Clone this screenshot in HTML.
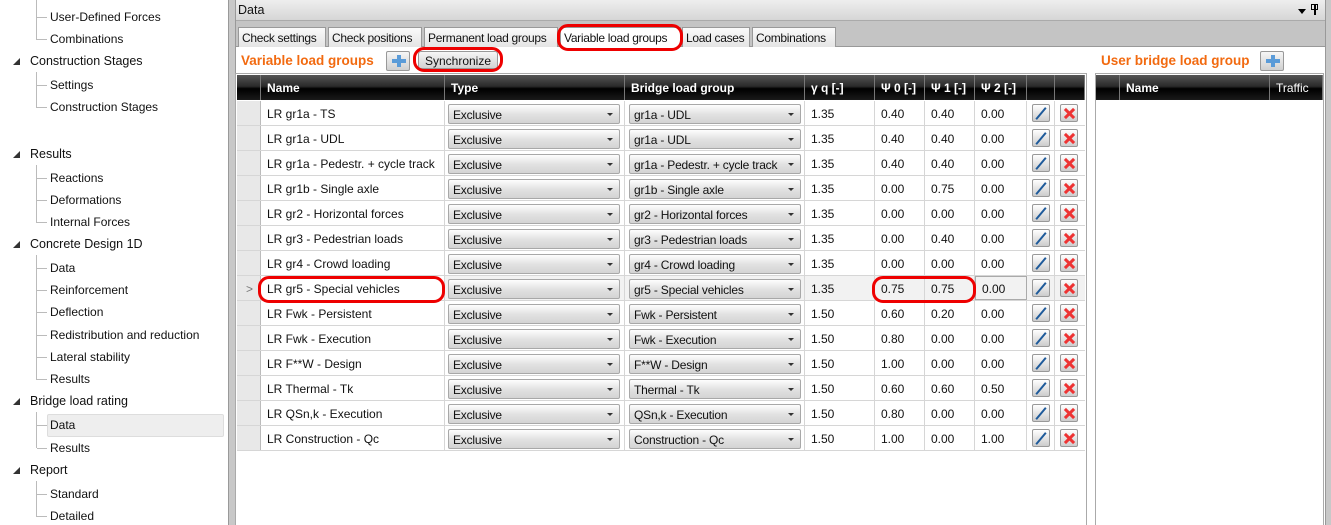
<!DOCTYPE html><html><head><style>
*{margin:0;padding:0;box-sizing:border-box}
body{width:1331px;height:525px;overflow:hidden;background:#fff;font-family:"Liberation Sans",sans-serif;font-size:12px;color:#111;position:relative}
.a{position:absolute;white-space:nowrap}
.t1{position:absolute;left:30px;font-size:12.5px;white-space:nowrap}
.t2{position:absolute;left:50px;font-size:12px;white-space:nowrap}
.tri{position:absolute;left:13px;width:0;height:0;border-left:7px solid transparent;border-bottom:7px solid #333}
.vl{position:absolute;left:36px;border-left:1px solid #bbb}
.hl{position:absolute;left:37px;width:10px;border-top:1px solid #bbb}
.tab{position:absolute;top:27px;height:20px;background:linear-gradient(#fafafa,#e4e4e4);border:1px solid #999;border-bottom:none;padding:3px 3px 0;font-size:12px;letter-spacing:-0.3px;white-space:nowrap;overflow:hidden}
.hd{position:absolute;top:75px;height:25px;background:linear-gradient(#555 0%,#2a2a2a 45%,#000 55%,#1a1a1a 100%);color:#fff;font-weight:bold;font-size:12px;padding:6px 6px 0;border-right:1px solid #777;white-space:nowrap}
.row{position:absolute;left:237px;width:848px;height:25px;border-bottom:1px solid #d6d6d6}
.c{position:absolute;top:0;height:24px;border-right:1px solid #d6d6d6;padding:6px 6px 0;font-size:12px;white-space:nowrap}
.rh{left:0;width:24px;background:#e8e8e8;border-right:1px solid #bbb}
.dd{position:absolute;top:3px;height:20px;border:1px solid #a8a8a8;border-radius:2px;background:linear-gradient(#fdfdfd,#e2e2e2 50%,#d4d4d4);padding:3px 4px 0;font-size:12px;white-space:nowrap;overflow:hidden;letter-spacing:-0.2px}
.dd:after{content:"";position:absolute;right:6px;top:8px;border-left:3px solid transparent;border-right:3px solid transparent;border-top:3px solid #333}
.ed,.dl{position:absolute;top:3px;width:18px;height:18px;border:1px solid #999;border-radius:2px;background:linear-gradient(#fff,#ccc)}
.ed:after{content:"";position:absolute;left:7px;top:1px;width:2px;height:15px;background:#1e5a9a;transform:rotate(40deg)}
.dl:before,.dl:after{content:"";position:absolute;left:7px;top:2px;width:3px;height:13px;background:#e33;transform:rotate(45deg)}
.dl:after{transform:rotate(-45deg)}
.red{position:absolute;border:3px solid #e00;border-radius:11px}
.or{color:#f26a10;font-weight:bold;font-size:13.5px}
.plus{position:absolute;width:24px;height:20px;border:1px solid #999;border-radius:2px;background:linear-gradient(#f6f6f6,#d0d0d0)}
.plus:before{content:"";position:absolute;left:10px;top:3px;width:4px;height:12px;background:#5a9bd8}
.plus:after{content:"";position:absolute;left:5px;top:7px;width:14px;height:4px;background:#5a9bd8}
</style></head><body>
<div class="vl" style="top:0;height:40px"></div>
<div class="hl" style="top:17px"></div><div class="t2" style="top:10px">User-Defined Forces</div>
<div class="hl" style="top:39px"></div><div class="t2" style="top:32px">Combinations</div>
<div class="tri" style="top:58px"></div><div class="t1" style="top:54px">Construction Stages</div>
<div class="vl" style="top:72px;height:36px"></div>
<div class="hl" style="top:85px"></div><div class="t2" style="top:78px">Settings</div>
<div class="hl" style="top:107px"></div><div class="t2" style="top:100px">Construction Stages</div>
<div class="tri" style="top:151px"></div><div class="t1" style="top:147px">Results</div>
<div class="vl" style="top:165px;height:58px"></div>
<div class="hl" style="top:178px"></div><div class="t2" style="top:171px">Reactions</div>
<div class="hl" style="top:200px"></div><div class="t2" style="top:193px">Deformations</div>
<div class="hl" style="top:222px"></div><div class="t2" style="top:215px">Internal Forces</div>
<div class="tri" style="top:241px"></div><div class="t1" style="top:237px">Concrete Design 1D</div>
<div class="vl" style="top:255px;height:125px"></div>
<div class="hl" style="top:268px"></div><div class="t2" style="top:261px">Data</div>
<div class="hl" style="top:290px"></div><div class="t2" style="top:283px">Reinforcement</div>
<div class="hl" style="top:312px"></div><div class="t2" style="top:305px">Deflection</div>
<div class="hl" style="top:335px"></div><div class="t2" style="top:328px">Redistribution and reduction</div>
<div class="hl" style="top:357px"></div><div class="t2" style="top:350px">Lateral stability</div>
<div class="hl" style="top:379px"></div><div class="t2" style="top:372px">Results</div>
<div class="tri" style="top:398px"></div><div class="t1" style="top:394px">Bridge load rating</div>
<div class="a" style="left:47px;top:414px;width:177px;height:23px;background:#eeeeee;border:1px solid #ddd;border-radius:2px"></div>
<div class="vl" style="top:412px;height:36px"></div>
<div class="hl" style="top:425px"></div><div class="t2" style="top:418px">Data</div>
<div class="hl" style="top:448px"></div><div class="t2" style="top:441px">Results</div>
<div class="tri" style="top:467px"></div><div class="t1" style="top:463px">Report</div>
<div class="vl" style="top:481px;height:36px"></div>
<div class="hl" style="top:494px"></div><div class="t2" style="top:487px">Standard</div>
<div class="hl" style="top:516px"></div><div class="t2" style="top:509px">Detailed</div>
<div class="a" style="left:228px;top:0;width:8px;height:525px;background:#c8c8c8;border-left:1px solid #999;border-right:1px solid #999"></div>
<div class="a" style="left:1325px;top:0;width:6px;height:525px;background:#c8c8c8;border-left:1px solid #999"></div>
<div class="a" style="left:236px;top:0;width:1089px;height:21px;background:linear-gradient(#eee,#d6d6d6);border-bottom:1px solid #aaa;padding:3px 2px;font-size:12.5px">Data</div>
<div class="a" style="left:1298px;top:9px;border-left:4px solid transparent;border-right:4px solid transparent;border-top:5px solid #000"></div>
<div class="a" style="left:1314px;top:4px;width:2px;height:11px;background:#000"></div>
<div class="a" style="left:1311px;top:4px;width:7px;height:6px;border:1px solid #000"></div>
<div class="a" style="left:236px;top:21px;width:1089px;height:26px;background:#c4c4c4;border-bottom:1px solid #999"></div>
<div class="tab" style="left:238px;width:88px">Check settings</div>
<div class="tab" style="left:328px;width:94px">Check positions</div>
<div class="tab" style="left:424px;width:134px">Permanent load groups</div>
<div class="tab" style="left:560px;width:121px;background:#fff;height:21px">Variable load groups</div>
<div class="tab" style="left:682px;width:68px">Load cases</div>
<div class="tab" style="left:752px;width:84px">Combinations</div>
<div class="a" style="left:236px;top:47px;width:1089px;height:478px;background:#fff"></div>
<div class="a or" style="left:241px;top:53px">Variable load groups</div>
<div class="plus" style="left:386px;top:51px"></div>
<div class="a" style="left:418px;top:51px;width:80px;height:18px;border:1px solid #999;border-radius:3px;background:linear-gradient(#f6f6f6,#d2d2d2);text-align:center;padding-top:2px">Synchronize</div>
<div class="a or" style="left:1101px;top:53px">User bridge load group</div>
<div class="plus" style="left:1260px;top:51px"></div>
<div class="a" style="left:235px;top:73px;width:852px;height:452px;border:1px solid #aaa;border-bottom:none"></div>
<div class="hd" style="left:237px;width:24px"></div>
<div class="hd" style="left:261px;width:184px">Name</div>
<div class="hd" style="left:445px;width:180px">Type</div>
<div class="hd" style="left:625px;width:180px">Bridge load group</div>
<div class="hd" style="left:805px;width:70px">γ q [-]</div>
<div class="hd" style="left:875px;width:50px">Ψ 0 [-]</div>
<div class="hd" style="left:925px;width:50px">Ψ 1 [-]</div>
<div class="hd" style="left:975px;width:52px">Ψ 2 [-]</div>
<div class="hd" style="left:1027px;width:28px"></div>
<div class="hd" style="left:1055px;width:30px"></div>
<div class="a" style="left:1095px;top:73px;width:229px;height:452px;border:1px solid #aaa;border-bottom:none"></div>
<div class="hd" style="left:1096px;width:24px"></div>
<div class="hd" style="left:1120px;width:150px">Name</div>
<div class="hd" style="left:1270px;width:53px;font-weight:normal">Traffic</div>

<div class="row" style="top:101px"><div class="c rh"></div><div class="c" style="left:24px;width:184px">LR gr1a - TS</div><div class="dd" style="left:211px;width:172px">Exclusive</div><div class="c" style="left:208px;width:180px"></div><div class="dd" style="left:392px;width:172px">gr1a - UDL</div><div class="c" style="left:388px;width:180px"></div><div class="c" style="left:568px;width:70px">1.35</div><div class="c" style="left:638px;width:50px">0.40</div><div class="c" style="left:688px;width:50px">0.40</div><div class="c" style="left:738px;width:52px">0.00</div><div class="c" style="left:790px;width:28px"></div><div class="ed" style="left:795px"></div><div class="dl" style="left:823px"></div></div>
<div class="row" style="top:126px"><div class="c rh"></div><div class="c" style="left:24px;width:184px">LR gr1a - UDL</div><div class="dd" style="left:211px;width:172px">Exclusive</div><div class="c" style="left:208px;width:180px"></div><div class="dd" style="left:392px;width:172px">gr1a - UDL</div><div class="c" style="left:388px;width:180px"></div><div class="c" style="left:568px;width:70px">1.35</div><div class="c" style="left:638px;width:50px">0.40</div><div class="c" style="left:688px;width:50px">0.40</div><div class="c" style="left:738px;width:52px">0.00</div><div class="c" style="left:790px;width:28px"></div><div class="ed" style="left:795px"></div><div class="dl" style="left:823px"></div></div>
<div class="row" style="top:151px"><div class="c rh"></div><div class="c" style="left:24px;width:184px">LR gr1a - Pedestr. + cycle track</div><div class="dd" style="left:211px;width:172px">Exclusive</div><div class="c" style="left:208px;width:180px"></div><div class="dd" style="left:392px;width:172px">gr1a - Pedestr. + cycle track</div><div class="c" style="left:388px;width:180px"></div><div class="c" style="left:568px;width:70px">1.35</div><div class="c" style="left:638px;width:50px">0.40</div><div class="c" style="left:688px;width:50px">0.40</div><div class="c" style="left:738px;width:52px">0.00</div><div class="c" style="left:790px;width:28px"></div><div class="ed" style="left:795px"></div><div class="dl" style="left:823px"></div></div>
<div class="row" style="top:176px"><div class="c rh"></div><div class="c" style="left:24px;width:184px">LR gr1b - Single axle</div><div class="dd" style="left:211px;width:172px">Exclusive</div><div class="c" style="left:208px;width:180px"></div><div class="dd" style="left:392px;width:172px">gr1b - Single axle</div><div class="c" style="left:388px;width:180px"></div><div class="c" style="left:568px;width:70px">1.35</div><div class="c" style="left:638px;width:50px">0.00</div><div class="c" style="left:688px;width:50px">0.75</div><div class="c" style="left:738px;width:52px">0.00</div><div class="c" style="left:790px;width:28px"></div><div class="ed" style="left:795px"></div><div class="dl" style="left:823px"></div></div>
<div class="row" style="top:201px"><div class="c rh"></div><div class="c" style="left:24px;width:184px">LR gr2 - Horizontal forces</div><div class="dd" style="left:211px;width:172px">Exclusive</div><div class="c" style="left:208px;width:180px"></div><div class="dd" style="left:392px;width:172px">gr2 - Horizontal forces</div><div class="c" style="left:388px;width:180px"></div><div class="c" style="left:568px;width:70px">1.35</div><div class="c" style="left:638px;width:50px">0.00</div><div class="c" style="left:688px;width:50px">0.00</div><div class="c" style="left:738px;width:52px">0.00</div><div class="c" style="left:790px;width:28px"></div><div class="ed" style="left:795px"></div><div class="dl" style="left:823px"></div></div>
<div class="row" style="top:226px"><div class="c rh"></div><div class="c" style="left:24px;width:184px">LR gr3 - Pedestrian loads</div><div class="dd" style="left:211px;width:172px">Exclusive</div><div class="c" style="left:208px;width:180px"></div><div class="dd" style="left:392px;width:172px">gr3 - Pedestrian loads</div><div class="c" style="left:388px;width:180px"></div><div class="c" style="left:568px;width:70px">1.35</div><div class="c" style="left:638px;width:50px">0.00</div><div class="c" style="left:688px;width:50px">0.40</div><div class="c" style="left:738px;width:52px">0.00</div><div class="c" style="left:790px;width:28px"></div><div class="ed" style="left:795px"></div><div class="dl" style="left:823px"></div></div>
<div class="row" style="top:251px"><div class="c rh"></div><div class="c" style="left:24px;width:184px">LR gr4 - Crowd loading</div><div class="dd" style="left:211px;width:172px">Exclusive</div><div class="c" style="left:208px;width:180px"></div><div class="dd" style="left:392px;width:172px">gr4 - Crowd loading</div><div class="c" style="left:388px;width:180px"></div><div class="c" style="left:568px;width:70px">1.35</div><div class="c" style="left:638px;width:50px">0.00</div><div class="c" style="left:688px;width:50px">0.00</div><div class="c" style="left:738px;width:52px">0.00</div><div class="c" style="left:790px;width:28px"></div><div class="ed" style="left:795px"></div><div class="dl" style="left:823px"></div></div>
<div class="row" style="top:276px;background:#f2f2f2"><div class="c rh" style="color:#777;padding-left:9px">&gt;</div><div class="c" style="left:24px;width:184px;background:#fff">LR gr5 - Special vehicles</div><div class="dd" style="left:211px;width:172px">Exclusive</div><div class="c" style="left:208px;width:180px"></div><div class="dd" style="left:392px;width:172px">gr5 - Special vehicles</div><div class="c" style="left:388px;width:180px"></div><div class="c" style="left:568px;width:70px">1.35</div><div class="c" style="left:638px;width:50px">0.75</div><div class="c" style="left:688px;width:50px">0.75</div><div class="c" style="left:738px;width:52px;border:1px solid #aaa;padding-top:5px">0.00</div><div class="c" style="left:790px;width:28px"></div><div class="ed" style="left:795px"></div><div class="dl" style="left:823px"></div></div>
<div class="row" style="top:301px"><div class="c rh"></div><div class="c" style="left:24px;width:184px">LR Fwk - Persistent</div><div class="dd" style="left:211px;width:172px">Exclusive</div><div class="c" style="left:208px;width:180px"></div><div class="dd" style="left:392px;width:172px">Fwk - Persistent</div><div class="c" style="left:388px;width:180px"></div><div class="c" style="left:568px;width:70px">1.50</div><div class="c" style="left:638px;width:50px">0.60</div><div class="c" style="left:688px;width:50px">0.20</div><div class="c" style="left:738px;width:52px">0.00</div><div class="c" style="left:790px;width:28px"></div><div class="ed" style="left:795px"></div><div class="dl" style="left:823px"></div></div>
<div class="row" style="top:326px"><div class="c rh"></div><div class="c" style="left:24px;width:184px">LR Fwk - Execution</div><div class="dd" style="left:211px;width:172px">Exclusive</div><div class="c" style="left:208px;width:180px"></div><div class="dd" style="left:392px;width:172px">Fwk - Execution</div><div class="c" style="left:388px;width:180px"></div><div class="c" style="left:568px;width:70px">1.50</div><div class="c" style="left:638px;width:50px">0.80</div><div class="c" style="left:688px;width:50px">0.00</div><div class="c" style="left:738px;width:52px">0.00</div><div class="c" style="left:790px;width:28px"></div><div class="ed" style="left:795px"></div><div class="dl" style="left:823px"></div></div>
<div class="row" style="top:351px"><div class="c rh"></div><div class="c" style="left:24px;width:184px">LR F**W - Design</div><div class="dd" style="left:211px;width:172px">Exclusive</div><div class="c" style="left:208px;width:180px"></div><div class="dd" style="left:392px;width:172px">F**W - Design</div><div class="c" style="left:388px;width:180px"></div><div class="c" style="left:568px;width:70px">1.50</div><div class="c" style="left:638px;width:50px">1.00</div><div class="c" style="left:688px;width:50px">0.00</div><div class="c" style="left:738px;width:52px">0.00</div><div class="c" style="left:790px;width:28px"></div><div class="ed" style="left:795px"></div><div class="dl" style="left:823px"></div></div>
<div class="row" style="top:376px"><div class="c rh"></div><div class="c" style="left:24px;width:184px">LR Thermal - Tk</div><div class="dd" style="left:211px;width:172px">Exclusive</div><div class="c" style="left:208px;width:180px"></div><div class="dd" style="left:392px;width:172px">Thermal - Tk</div><div class="c" style="left:388px;width:180px"></div><div class="c" style="left:568px;width:70px">1.50</div><div class="c" style="left:638px;width:50px">0.60</div><div class="c" style="left:688px;width:50px">0.60</div><div class="c" style="left:738px;width:52px">0.50</div><div class="c" style="left:790px;width:28px"></div><div class="ed" style="left:795px"></div><div class="dl" style="left:823px"></div></div>
<div class="row" style="top:401px"><div class="c rh"></div><div class="c" style="left:24px;width:184px">LR QSn,k - Execution</div><div class="dd" style="left:211px;width:172px">Exclusive</div><div class="c" style="left:208px;width:180px"></div><div class="dd" style="left:392px;width:172px">QSn,k - Execution</div><div class="c" style="left:388px;width:180px"></div><div class="c" style="left:568px;width:70px">1.50</div><div class="c" style="left:638px;width:50px">0.80</div><div class="c" style="left:688px;width:50px">0.00</div><div class="c" style="left:738px;width:52px">0.00</div><div class="c" style="left:790px;width:28px"></div><div class="ed" style="left:795px"></div><div class="dl" style="left:823px"></div></div>
<div class="row" style="top:426px"><div class="c rh"></div><div class="c" style="left:24px;width:184px">LR Construction - Qc</div><div class="dd" style="left:211px;width:172px">Exclusive</div><div class="c" style="left:208px;width:180px"></div><div class="dd" style="left:392px;width:172px">Construction - Qc</div><div class="c" style="left:388px;width:180px"></div><div class="c" style="left:568px;width:70px">1.50</div><div class="c" style="left:638px;width:50px">1.00</div><div class="c" style="left:688px;width:50px">0.00</div><div class="c" style="left:738px;width:52px">1.00</div><div class="c" style="left:790px;width:28px"></div><div class="ed" style="left:795px"></div><div class="dl" style="left:823px"></div></div>

<div class="red" style="left:557px;top:24px;width:126px;height:27px"></div>
<div class="red" style="left:413px;top:47px;width:90px;height:25px"></div>
<div class="red" style="left:258px;top:276px;width:187px;height:27px"></div>
<div class="red" style="left:872px;top:276px;width:104px;height:27px"></div>
</body></html>
